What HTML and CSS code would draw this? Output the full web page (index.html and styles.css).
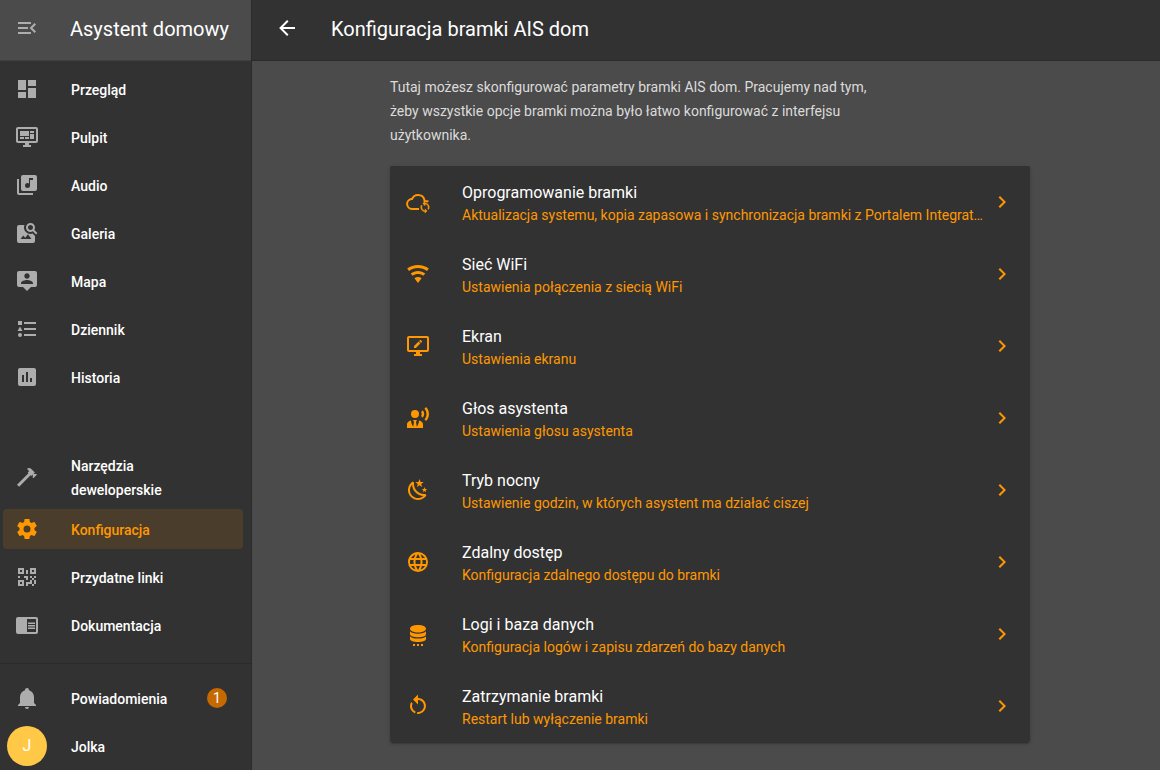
FILE: index.html
```html
<!DOCTYPE html>
<html lang="pl">
<head>
<meta charset="utf-8">
<meta name="viewport" content="width=device-width, initial-scale=1">
<title>Konfiguracja bramki AIS dom</title>
<link rel="stylesheet" href="styles.css">
</head>
<body>
<div class="app">
  <aside class="sidebar">
    <div class="sidebar-header">
      <button class="icon-button" type="button" aria-label="Zwiń menu"><svg class="icon" viewBox="0 0 24 24"><path d="M21,15.61L19.59,17L14.58,12L19.59,7L21,8.39L17.44,12L21,15.61M3,6H16V8H3V6M3,13V11H13V13H3M3,18V16H16V18H3Z"/></svg></button>
      <span class="sidebar-title">Asystent domowy</span>
    </div>
    <nav class="nav">
      <a class="nav-item" href="#"><svg class="icon" viewBox="0 0 24 24"><path d="M13,3V9H21V3M13,21H21V11H13M3,21H11V15H3M3,13H11V3H3V13Z"/></svg><span class="nav-label">Przegląd</span></a>
      <a class="nav-item" href="#"><svg class="icon" viewBox="0 0 24 24"><path d="M21,16V4H3V16H21M21,2A2,2 0 0,1 23,4V16A2,2 0 0,1 21,18H14V20H16V22H8V20H10V18H3C1.89,18 1,17.1 1,16V4C1,2.89 1.89,2 3,2H21M5,6H14V11H5V6M15,6H19V8H15V6M19,9V14H15V9H19M5,12H9V14H5V12M10,12H14V14H10V12Z"/></svg><span class="nav-label">Pulpit</span></a>
      <a class="nav-item" href="#"><svg class="icon" viewBox="0 0 24 24"><path d="M4,6H2V20A2,2 0 0,0 4,22H18V20H4M18,7H15V12.5A2.5,2.5 0 0,1 12.5,15A2.5,2.5 0 0,1 10,12.5A2.5,2.5 0 0,1 12.5,10C13.07,10 13.58,10.19 14,10.5V5H18M20,2H8A2,2 0 0,0 6,4V16A2,2 0 0,0 8,18H20A2,2 0 0,0 22,16V4A2,2 0 0,0 20,2Z"/></svg><span class="nav-label">Audio</span></a>
      <a class="nav-item" href="#"><svg class="icon" viewBox="0 0 24 24"><path d="M15.5,9C16.2,9 16.79,8.76 17.27,8.27C17.76,7.79 18,7.2 18,6.5C18,5.83 17.76,5.23 17.27,4.73C16.79,4.23 16.2,4 15.5,4C14.83,4 14.23,4.23 13.73,4.73C13.23,5.23 13,5.83 13,6.5C13,7.2 13.23,7.79 13.73,8.27C14.23,8.76 14.83,9 15.5,9M19.31,8.91L22.41,12L21,13.41L17.86,10.31C17.08,10.78 16.28,11 15.47,11C14.22,11 13.16,10.58 12.3,9.7C11.45,8.83 11,7.77 11,6.5C11,5.27 11.45,4.2 12.33,3.33C13.2,2.45 14.27,2 15.5,2C16.77,2 17.83,2.45 18.7,3.33C19.58,4.2 20,5.27 20,6.5C20,7.33 19.78,8.13 19.31,8.91M16.5,18H5.5L8.25,14.5L10.22,16.83L12.94,13.31L16.5,18V18M18,13L20,15V20A2,2 0 0 1 18,22H4A2,2 0 0 1 2,20V6A2,2 0 0 1 4,4H9.5C9.2,4.64 9,5.8 9,6.5C9,8.3 9.6,9.8 10.9,11.1C12.1,12.3 13.6,13 15.5,13C16.4,13 17.2,12.8 18,12.5Z" fill-rule="evenodd"/></svg><span class="nav-label">Galeria</span></a>
      <a class="nav-item" href="#"><svg class="icon" viewBox="0 0 24 24"><path d="M4,2H20A2,2 0 0,1 22,4V16A2,2 0 0,1 20,18H16L12,22L8,18H4A2,2 0 0,1 2,16V4A2,2 0 0,1 4,2M12,4.3C10.5,4.3 9.3,5.5 9.3,7C9.3,8.5 10.5,9.7 12,9.7C13.5,9.7 14.7,8.5 14.7,7C14.7,5.5 13.5,4.3 12,4.3M18,15V14.1C18,12.1 14,11 12,11C10,11 6,12.1 6,14.1V15H18Z" fill-rule="evenodd"/></svg><span class="nav-label">Mapa</span></a>
      <a class="nav-item" href="#"><svg class="icon" viewBox="0 0 24 24"><path d="M5,9.5L7.5,14H2.5L5,9.5M3,4H7V8H3V4M5,20A2,2 0 0,0 7,18A2,2 0 0,0 5,16A2,2 0 0,0 3,18A2,2 0 0,0 5,20M9,5V7H21V5H9M9,19H21V17H9V19M9,13H21V11H9V13Z"/></svg><span class="nav-label">Dziennik</span></a>
      <a class="nav-item" href="#"><svg class="icon" viewBox="0 0 24 24"><path d="M17,17H15V13H17M13,17H11V7H13M9,17H7V10H9M19,3H5C3.89,3 3,3.89 3,5V19A2,2 0 0,0 5,21H19A2,2 0 0,0 21,19V5C21,3.89 20.1,3 19,3Z" fill-rule="evenodd"/></svg><span class="nav-label">Historia</span></a>
      <div class="nav-spacer"></div>
      <a class="nav-item" href="#"><svg class="icon" viewBox="0 0 24 24"><path d="M2,19.63L13.43,8.2L12.72,7.5L14.14,6.07L12,3.89C13.2,2.7 15.09,2.7 16.27,3.89L19.87,7.5L18.45,8.91H21.29L22,9.62L18.45,13.21L17.74,12.5V9.62L16.27,11.04L15.56,10.33L4.13,21.76L2,19.63Z"/></svg><span class="nav-label">Narzędzia deweloperskie</span></a>
      <a class="nav-item is-active" href="#" aria-current="page"><svg class="icon" viewBox="0 0 24 24"><path d="M12,15.5A3.5,3.5 0 0,1 8.5,12A3.5,3.5 0 0,1 12,8.5A3.5,3.5 0 0,1 15.5,12A3.5,3.5 0 0,1 12,15.5M19.43,12.97C19.47,12.65 19.5,12.33 19.5,12C19.5,11.67 19.47,11.34 19.43,11L21.54,9.37C21.73,9.22 21.78,8.95 21.66,8.73L19.66,5.27C19.54,5.05 19.27,4.96 19.05,5.05L16.56,6.05C16.04,5.66 15.5,5.32 14.87,5.07L14.5,2.42C14.46,2.18 14.25,2 14,2H10C9.75,2 9.54,2.18 9.5,2.42L9.13,5.07C8.5,5.32 7.96,5.66 7.44,6.05L4.95,5.05C4.73,4.96 4.46,5.05 4.34,5.27L2.34,8.73C2.21,8.95 2.27,9.22 2.46,9.37L4.57,11C4.53,11.34 4.5,11.67 4.5,12C4.5,12.33 4.53,12.65 4.57,12.97L2.46,14.63C2.27,14.78 2.21,15.05 2.34,15.27L4.34,18.73C4.46,18.95 4.73,19.03 4.95,18.95L7.44,17.94C7.96,18.34 8.5,18.68 9.13,18.93L9.5,21.58C9.54,21.82 9.75,22 10,22H14C14.25,22 14.46,21.82 14.5,21.58L14.87,18.93C15.5,18.67 16.04,18.34 16.56,17.94L19.05,18.95C19.27,19.03 19.54,18.95 19.66,18.73L21.66,15.27C21.78,15.05 21.73,14.78 21.54,14.63L19.43,12.97Z" fill-rule="evenodd"/></svg><span class="nav-label">Konfiguracja</span></a>
      <a class="nav-item" href="#"><svg class="icon" viewBox="0 0 24 24"><path d="M3,11H5V13H3V11M11,5H13V9H11V5M9,11H13V15H11V13H9V11M15,11H17V13H19V11H21V13H19V15H21V19H19V21H17V19H13V21H11V17H15V15H17V13H15V11M19,19V15H17V19H19M15,3H21V9H15V3M17,5V7H19V5H17M3,3H9V9H3V3M5,5V7H7V5H5M3,15H9V21H3V15M5,17V19H7V17H5Z" fill-rule="evenodd"/></svg><span class="nav-label">Przydatne linki</span></a>
      <a class="nav-item" href="#"><svg class="icon" viewBox="0 0 24 24"><path d="M21,4H3A2,2 0 0,0 1,6V19A2,2 0 0,0 3,21H21A2,2 0 0,0 23,19V6A2,2 0 0,0 21,4M21,19H12V6H21M13,12H20V13.5H13M13,9.5H20V11H13M13,14.5H20V16H13" fill-rule="evenodd"/></svg><span class="nav-label">Dokumentacja</span></a>
    </nav>
    <div class="sidebar-footer">
      <a class="nav-item" href="#"><svg class="icon" viewBox="0 0 24 24"><path d="M21,19V20H3V19L5,17V11C5,7.9 7.03,5.17 10,4.29C10,4.19 10,4.1 10,4A2,2 0 0,1 12,2A2,2 0 0,1 14,4C14,4.1 14,4.19 14,4.29C16.97,5.17 19,7.9 19,11V17L21,19M14,21A2,2 0 0,1 12,23A2,2 0 0,1 10,21"/></svg><span class="nav-label">Powiadomienia</span><span class="badge">1</span></a>
      <a class="nav-item" href="#"><span class="avatar">J</span><span class="nav-label">Jolka</span></a>
    </div>
  </aside>

  <main class="main">
    <header class="toolbar">
      <button class="icon-button" type="button" aria-label="Wstecz"><svg class="icon" viewBox="0 0 24 24"><path d="M20,11V13H8L13.5,18.5L12.08,19.92L4.16,12L12.08,4.08L13.5,5.5L8,11H20Z"/></svg></button>
      <h1 class="toolbar-title">Konfiguracja bramki AIS dom</h1>
    </header>
    <div class="content">
      <div class="column">
        <p class="intro">Tutaj możesz skonfigurować parametry bramki AIS dom. Pracujemy nad tym, żeby wszystkie opcje bramki można było łatwo konfigurować z interfejsu użytkownika.</p>
        <div class="card">
          <a class="row" href="#">
            <svg class="icon" viewBox="0 0 24 24"><path class="line" d="M13,19H6A5,5 0 0 1 5.4,9.05H6C7,6.6 9.2,5 12,5C15.3,5 17.9,7.2 18.5,10.3V11H19.3C20.6,11 21.6,11.2 22.4,11.7"/><path transform="translate(12.6 10.9) scale(.53)" d="M12,18A6,6 0 0,1 6,12C6,11 6.25,10.03 6.7,9.2L5.24,7.74C4.46,8.97 4,10.43 4,12A8,8 0 0,0 12,20V23L16,19L12,15M12,4V1L8,5L12,9V6A6,6 0 0,1 18,12C18,13 17.75,13.97 17.3,14.8L18.76,16.26C19.54,15.03 20,13.57 20,12A8,8 0 0,0 12,4Z" stroke="currentColor" stroke-width="1"/></svg>
            <span class="row-text"><span class="row-title">Oprogramowanie bramki</span><span class="row-sub">Aktualizacja systemu, kopia zapasowa i synchronizacja bramki z Portalem Integratora</span></span>
            <svg class="icon" viewBox="0 0 24 24"><path d="M8.59,16.58L13.17,12L8.59,7.41L10,6L16,12L10,18L8.59,16.58Z"/></svg>
          </a>
          <a class="row" href="#">
            <svg class="icon" viewBox="0 0 24 24"><path d="M12,21L15.6,16.2C14.6,15.45 13.35,15 12,15C10.65,15 9.4,15.45 8.4,16.2L12,21M12,3C7.95,3 4.21,4.34 1.2,6.6L3,9C5.5,7.12 8.62,6 12,6C15.38,6 18.5,7.12 21,9L22.8,6.6C19.79,4.34 16.05,3 12,3M12,9C9.3,9 6.81,9.89 4.8,11.4L6.6,13.8C8.1,12.67 9.97,12 12,12C14.03,12 15.9,12.67 17.4,13.8L19.2,11.4C17.19,9.89 14.7,9 12,9Z"/></svg>
            <span class="row-text"><span class="row-title">Sieć WiFi</span><span class="row-sub">Ustawienia połączenia z siecią WiFi</span></span>
            <svg class="icon" viewBox="0 0 24 24"><path d="M8.59,16.58L13.17,12L8.59,7.41L10,6L16,12L10,18L8.59,16.58Z"/></svg>
          </a>
          <a class="row" href="#">
            <svg class="icon" viewBox="0 0 24 24"><path fill-rule="evenodd" d="M21,16V4H3V16H21M21,2A2,2 0 0,1 23,4V16A2,2 0 0,1 21,18H14V20H16V22H8V20H10V18H3C1.89,18 1,17.1 1,16V4C1,2.89 1.89,2 3,2H21M8,12.1V14H9.9L14.4,9.5L12.5,7.6ZM13.1,7L15,8.9L15.9,8C16.1,7.8 16.1,7.5 15.9,7.3L14.7,6.1C14.5,5.9 14.2,5.9 14,6.1Z"/></svg>
            <span class="row-text"><span class="row-title">Ekran</span><span class="row-sub">Ustawienia ekranu</span></span>
            <svg class="icon" viewBox="0 0 24 24"><path d="M8.59,16.58L13.17,12L8.59,7.41L10,6L16,12L10,18L8.59,16.58Z"/></svg>
          </a>
          <a class="row" href="#">
            <svg class="icon" viewBox="0 0 24 24"><path transform="translate(-3 1)" d="M12 3A4 4 0 0 1 16 7A4 4 0 0 1 12 11A4 4 0 0 1 8 7A4 4 0 0 1 12 3M16 13.54C16 14.6 15.72 17.07 13.81 19.83L13 15L13.94 13.12C13.32 13.05 12.67 13 12 13S10.68 13.05 10.06 13.12L11 15L10.19 19.83C8.28 17.07 8 14.6 8 13.54C5.61 14.24 4 15.5 4 17V21H20V17C20 15.5 18.4 14.24 16 13.54Z"/><path d="M16.76,4.36C18.78,6.56 18.78,9.61 16.76,11.63L15.08,9.94C15.92,8.76 15.92,7.23 15.08,6.05L16.76,4.36M20.07,1C24,5.05 23.97,11.11 20.07,15L18.44,13.37C21.21,10.19 21.21,5.65 18.44,2.63L20.07,1Z"/></svg>
            <span class="row-text"><span class="row-title">Głos asystenta</span><span class="row-sub">Ustawienia głosu asystenta</span></span>
            <svg class="icon" viewBox="0 0 24 24"><path d="M8.59,16.58L13.17,12L8.59,7.41L10,6L16,12L10,18L8.59,16.58Z"/></svg>
          </a>
          <a class="row" href="#">
            <svg class="icon" viewBox="0 0 24 24"><path d="M17.75,4.09L15.22,6.03L16.13,9.09L13.5,7.28L10.87,9.09L11.78,6.03L9.25,4.09L12.44,4L13.5,1L14.56,4L17.75,4.09M21.25,11L19.61,12.25L20.2,14.23L18.5,13.06L16.8,14.23L17.39,12.25L15.75,11L17.81,10.95L18.5,9L19.19,10.95L21.25,11M18.97,15.95C19.8,15.87 20.69,17.05 20.16,17.8C19.84,18.25 19.5,18.67 19.08,19.07C15.17,23 8.84,23 4.94,19.07C1.03,15.17 1.03,8.83 4.94,4.93C5.34,4.53 5.76,4.17 6.21,3.85C6.96,3.32 8.14,4.21 8.06,5.04C7.79,7.9 8.75,10.87 10.95,13.06C13.14,15.26 16.1,16.22 18.97,15.95M17.33,17.97C14.5,17.81 11.7,16.64 9.53,14.5C7.36,12.31 6.2,9.5 6.04,6.68C3.23,9.82 3.34,14.64 6.35,17.66C9.37,20.67 14.19,20.78 17.33,17.97Z"/></svg>
            <span class="row-text"><span class="row-title">Tryb nocny</span><span class="row-sub">Ustawienie godzin, w których asystent ma działać ciszej</span></span>
            <svg class="icon" viewBox="0 0 24 24"><path d="M8.59,16.58L13.17,12L8.59,7.41L10,6L16,12L10,18L8.59,16.58Z"/></svg>
          </a>
          <a class="row" href="#">
            <svg class="icon" viewBox="0 0 24 24"><path d="M16.36,14C16.44,13.34 16.5,12.68 16.5,12C16.5,11.32 16.44,10.66 16.36,10H19.74C19.9,10.64 20,11.31 20,12C20,12.69 19.9,13.36 19.74,14M14.59,19.56C15.19,18.45 15.65,17.25 15.97,16H18.92C17.96,17.65 16.43,18.93 14.59,19.56M14.34,14H9.66C9.56,13.34 9.5,12.68 9.5,12C9.5,11.32 9.56,10.65 9.66,10H14.34C14.43,10.65 14.5,11.32 14.5,12C14.5,12.68 14.43,13.34 14.34,14M12,19.96C11.17,18.76 10.5,17.43 10.09,16H13.91C13.5,17.43 12.83,18.76 12,19.96M8,8H5.08C6.03,6.34 7.57,5.06 9.4,4.44C8.8,5.55 8.35,6.75 8,8M5.08,16H8C8.35,17.25 8.8,18.45 9.4,19.56C7.57,18.93 6.03,17.65 5.08,16M4.26,14C4.1,13.36 4,12.69 4,12C4,11.31 4.1,10.64 4.26,10H7.64C7.56,10.66 7.5,11.32 7.5,12C7.5,12.68 7.56,13.34 7.64,14M12,4.03C12.83,5.23 13.5,6.57 13.91,8H10.09C10.5,6.57 11.17,5.23 12,4.03M18.92,8H15.97C15.65,6.75 15.19,5.55 14.59,4.44C16.43,5.07 17.96,6.34 18.92,8M12,2C6.47,2 2,6.5 2,12A10,10 0 0,0 12,22A10,10 0 0,0 22,12A10,10 0 0,0 12,2Z" fill-rule="evenodd"/></svg>
            <span class="row-text"><span class="row-title">Zdalny dostęp</span><span class="row-sub">Konfiguracja zdalnego dostępu do bramki</span></span>
            <svg class="icon" viewBox="0 0 24 24"><path d="M8.59,16.58L13.17,12L8.59,7.41L10,6L16,12L10,18L8.59,16.58Z"/></svg>
          </a>
          <a class="row" href="#">
            <svg class="icon" viewBox="0 0 24 24"><path d="M12,3C7.58,3 4,4.6 4,6.7C4,8.8 7.58,10.4 12,10.4C16.42,10.4 20,8.8 20,6.7C20,4.6 16.42,3 12,3M4,9.3C5,10.8 8.2,11.7 12,11.7S19,10.8 20,9.3V12.3C20,14 16.4,15.3 12,15.3S4,14 4,12.3ZM4,14.2C5,15.7 8.2,16.6 12,16.6S19,15.7 20,14.2V17C20,18.9 16.4,20 12,20S4,18.9 4,17ZM7,22H9V24H7ZM11,22H13V24H11ZM15,22H17V24H15Z"/></svg>
            <span class="row-text"><span class="row-title">Logi i baza danych</span><span class="row-sub">Konfiguracja logów i zapisu zdarzeń do bazy danych</span></span>
            <svg class="icon" viewBox="0 0 24 24"><path d="M8.59,16.58L13.17,12L8.59,7.41L10,6L16,12L10,18L8.59,16.58Z"/></svg>
          </a>
          <a class="row" href="#">
            <svg class="icon" viewBox="0 0 24 24"><path d="M12,4C14.1,4 16.1,4.8 17.6,6.3C20.7,9.4 20.7,14.5 17.6,17.6C15.8,19.5 13.3,20.2 10.9,19.9L11.4,17.9C13.1,18.1 14.9,17.5 16.2,16.2C18.5,13.9 18.5,10.1 16.2,7.7C15.1,6.6 13.5,6 12,6V10.6L7,5.6L12,0.6V4M6.3,17.6C3.7,15 3.3,11 5.1,7.9L6.6,9.4C5.5,11.6 5.9,14.4 7.8,16.2C8.3,16.7 8.9,17.1 9.6,17.4L9,19.4C8,19 7.1,18.4 6.3,17.6Z"/></svg>
            <span class="row-text"><span class="row-title">Zatrzymanie bramki</span><span class="row-sub">Restart lub wyłączenie bramki</span></span>
            <svg class="icon" viewBox="0 0 24 24"><path d="M8.59,16.58L13.17,12L8.59,7.41L10,6L16,12L10,18L8.59,16.58Z"/></svg>
          </a>
        </div>
      </div>
    </div>
  </main>
</div>
</body>
</html>
```

FILE: styles.css
```css
:root {
  --surface: #323232;
  --background: #4b4b4b;
  --accent: #ff9800;
  --divider: rgba(0, 0, 0, 0.14);
}

* {
  box-sizing: border-box;
}

body {
  margin: 0;
  background: var(--background);
  color: #fff;
  font-family: Roboto, "Noto Sans", sans-serif;
  font-size: 14px;
  line-height: 24px;
}

a {
  color: inherit;
  text-decoration: none;
}

.app {
  display: flex;
  min-height: 100vh;
}

.icon {
  display: block;
  flex: none;
  width: 24px;
  height: 24px;
  fill: currentColor;
}

.line {
  fill: none;
  stroke: currentColor;
  stroke-width: 2;
}

.icon-button {
  display: grid;
  place-items: center;
  width: 48px;
  height: 48px;
  padding: 0;
  border: 0;
  background: none;
  color: inherit;
  cursor: pointer;
}

/* Sidebar */
.sidebar {
  display: flex;
  flex: none;
  flex-direction: column;
  width: 252px;
  border-right: 1px solid #2b2b2b;
  background: var(--surface);
}

.sidebar-header {
  display: flex;
  align-items: center;
  gap: 19px;
  height: 61px;
  padding: 0 3px 4px;
  border-bottom: 1px solid var(--divider);
  background: var(--background);
}

.sidebar-header .icon-button {
  color: #adadad;
}

.sidebar-title,
.toolbar-title {
  margin: 0;
  padding-top: 2px;
  font-size: 20px;
  font-weight: 400;
  line-height: 24px;
}

.nav,
.sidebar-footer {
  display: flex;
  flex-direction: column;
  gap: 8px;
  padding: 8px 8px 18px 3px;
}

.nav {
  flex: 1;
}

.nav-spacer {
  flex: 1;
}

.nav-item {
  display: grid;
  grid-template-columns: 48px 1fr auto;
  align-items: center;
  justify-items: start;
  column-gap: 20px;
  min-height: 40px;
  padding-right: 16px;
  border-radius: 4px;
  font-weight: 500;
}

.nav-label {
  margin: 1px 0 -1px;
}

.nav-item .icon {
  justify-self: center;
  color: #adadad;
}

.nav-item.is-active {
  background: rgba(255, 152, 0, 0.12);
  color: var(--accent);
}

.nav-item.is-active .icon {
  color: var(--accent);
}

.sidebar-footer {
  padding: 14px 8px 4px 3px;
  border-top: 1px solid var(--divider);
}

.badge {
  width: 20px;
  height: 20px;
  border-radius: 50%;
  background: #c66900;
  font-weight: 400;
  line-height: 20px;
  text-align: center;
}

.avatar {
  justify-self: center;
  width: 40px;
  height: 40px;
  border-radius: 50%;
  background: #ffc947;
  font-size: 16px;
  font-weight: 400;
  line-height: 40px;
  text-align: center;
}

/* Main area */
.main {
  flex: 1;
  min-width: 0;
}

.toolbar {
  display: flex;
  align-items: center;
  gap: 20px;
  height: 61px;
  padding: 0 11px 4px;
  border-bottom: 1px solid #2b2b2b;
  background: var(--surface);
}

.content {
  padding: 14px 0 28px 8px;
}

.column {
  max-width: 640px;
  margin: 0 auto;
}

.intro {
  max-width: 500px;
  margin: 0 0 19px;
  color: #dbdbdb;
}

.card {
  border-radius: 2px;
  background: var(--surface);
  box-shadow: 0 2px 2px rgba(0, 0, 0, 0.14), 0 1px 5px rgba(0, 0, 0, 0.12), 0 3px 1px -2px rgba(0, 0, 0, 0.2);
}

.row {
  display: flex;
  align-items: center;
  min-height: 72px;
  padding: 0 16px;
  color: var(--accent);
}

.row-text {
  display: flex;
  flex: 1;
  flex-direction: column;
  min-width: 0;
  margin: 0 6px 0 32px;
  padding-top: 2px;
}

.row-title,
.row-sub {
  overflow: hidden;
  text-overflow: ellipsis;
  white-space: nowrap;
}

.row-title {
  color: #fff;
  font-size: 16px;
  line-height: 24px;
}

.row-sub {
  line-height: 20px;
}
```
